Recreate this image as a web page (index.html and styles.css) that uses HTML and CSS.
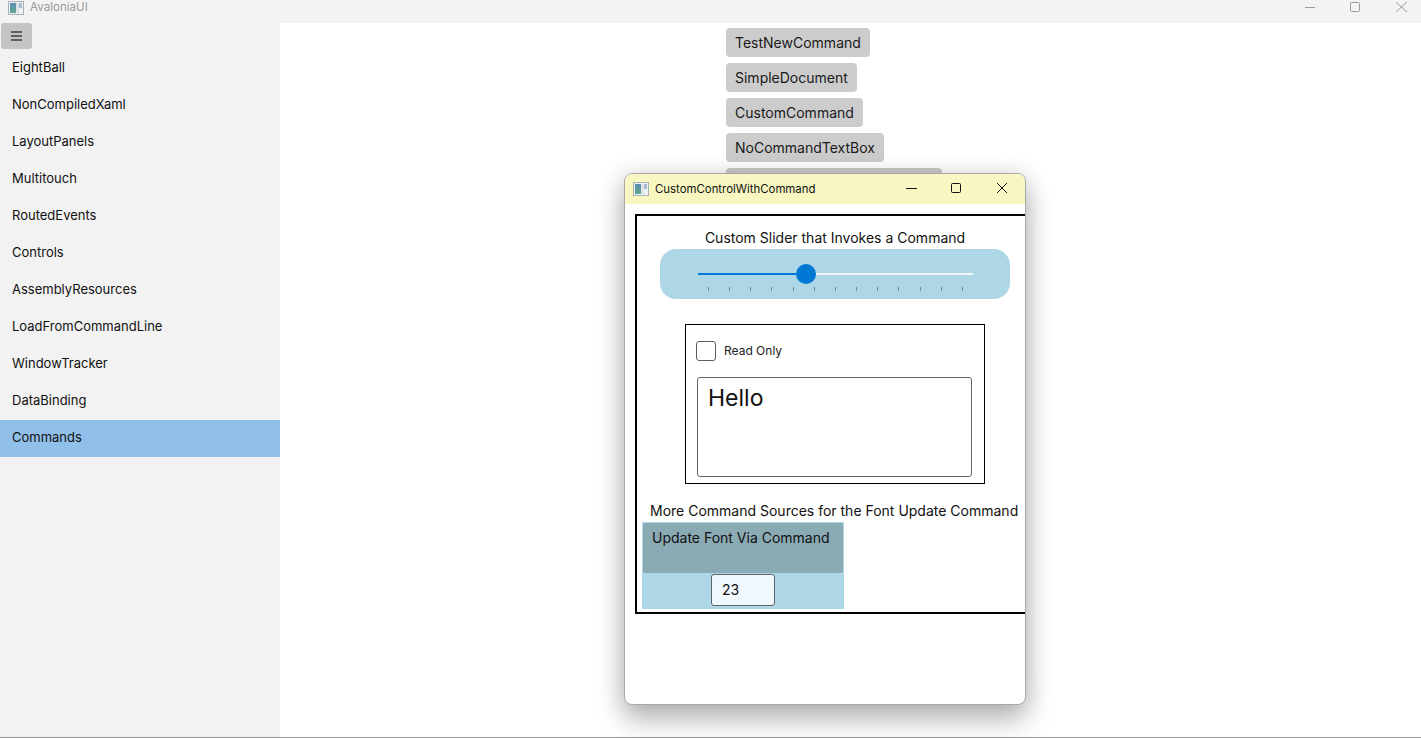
FILE: index.html
```html
<!DOCTYPE html>
<html lang="en">
<head>
<meta charset="utf-8">
<title>AvaloniaUI</title>
<link rel="stylesheet" href="styles.css">
</head>
<body>
<div class="app">
  <header class="titlebar">
    <svg class="appicon" viewBox="0 0 16 14"><defs><linearGradient id="ig" x1="0" y1="0" x2="0" y2="1"><stop offset="0" stop-color="#5b8db5"/><stop offset="1" stop-color="#5fa88c"/></linearGradient></defs><rect x=".5" y=".5" width="15" height="13" fill="#eef2f4" stroke="#a9b1b5"/><rect x="2" y="2" width="6" height="10" fill="url(#ig)"/><rect x="8" y="2" width="3" height="10" fill="#dde3e6"/><rect x="11" y="2" width="3" height="5" fill="#a9bccb"/></svg>
    <span class="apptitle">AvaloniaUI</span>
    <div class="caption">
      <svg class="capbtn" viewBox="0 0 46 23"><path d="M22 7.500h10" stroke="#9a9a9a" fill="none"/></svg>
      <svg class="capbtn" viewBox="0 0 46 23"><rect x="21.500" y="2.500" width="9" height="9" rx="1" stroke="#9a9a9a" fill="none"/></svg>
      <svg class="capbtn" viewBox="0 0 46 23"><path d="M21 2l11 10M32 2L21 12" stroke="#9a9a9a" fill="none"/></svg>
    </div>
  </header>
  <div class="body">
    <aside class="sidebar">
      <button class="hamburger"><svg viewBox="0 0 11 10" width="11" height="10"><path d="M0 1h11M0 5h11M0 9h11" stroke="#606060" stroke-width="2" fill="none"/></svg></button>
      <nav class="nav">
        <div class="navitem">EightBall</div>
        <div class="navitem">NonCompiledXaml</div>
        <div class="navitem">LayoutPanels</div>
        <div class="navitem">Multitouch</div>
        <div class="navitem">RoutedEvents</div>
        <div class="navitem">Controls</div>
        <div class="navitem">AssemblyResources</div>
        <div class="navitem">LoadFromCommandLine</div>
        <div class="navitem">WindowTracker</div>
        <div class="navitem">DataBinding</div>
        <div class="navitem selected">Commands</div>
      </nav>
    </aside>
    <main class="main">
      <button class="cmd">TestNewCommand</button>
      <button class="cmd">SimpleDocument</button>
      <button class="cmd">CustomCommand</button>
      <button class="cmd">NoCommandTextBox</button>
      <button class="cmd cmd-wide">&nbsp;</button>
    </main>
  </div>
</div>

<section class="window">
  <div class="wintitle">
    <svg class="winicon" viewBox="0 0 16 14"><rect x=".5" y=".5" width="15" height="13" fill="#eef2f4" stroke="#a9b1b5"/><rect x="2" y="2" width="6" height="10" fill="url(#ig)"/><rect x="8" y="2" width="3" height="10" fill="#dde3e6"/><rect x="11" y="2" width="3" height="5" fill="#a9bccb"/></svg>
    <span class="winname">CustomControlWithCommand</span>
    <div class="wincaption">
      <svg class="wincap" viewBox="0 0 45 30"><path d="M16 14.500h11" stroke="#111" fill="none"/></svg>
      <svg class="wincap" viewBox="0 0 45 30"><rect x="16.500" y="9.500" width="9" height="9" rx="1" stroke="#111" fill="none"/></svg>
      <svg class="wincap" viewBox="0 0 45 30"><path d="M17 9l10 10M27 9L17 19" stroke="#111" fill="none"/></svg>
    </div>
  </div>
  <div class="frame">
    <div class="slidercaption">Custom Slider that Invokes a Command</div>
    <div class="sliderpanel">
      <div class="track">
        <span class="filled"></span><span class="thumb"></span><span class="rest"></span>
      </div>
      <div class="ticks">
        <i></i><i></i><i></i><i></i><i></i><i></i><i></i><i></i><i></i><i></i><i></i><i></i><i></i>
      </div>
    </div>
    <div class="editor">
      <label class="check"><span class="box"></span><span class="checktext">Read Only</span></label>
      <div class="textbox">Hello</div>
    </div>
    <div class="morecaption">More Command Sources for the Font Update Command</div>
    <div class="sources">
      <button class="updatebtn">Update Font Via Command</button>
      <div class="sizebox">23</div>
    </div>
  </div>
</section>
</body>
</html>
```
FILE: styles.css
```css
* { box-sizing: border-box; }
html, body { margin: 0; height: 100%; overflow: hidden; }
body { font-family: Inter, "Liberation Sans", sans-serif; color: #111; background: #fff; }
button { font: inherit; color: inherit; border: 0; padding: 0; }

.app { display: flex; flex-direction: column; height: 738px; border-bottom: 1px solid #9a9a9a; }
.titlebar { display: flex; align-items: center; height: 23px; flex: none; background: #f3f3f3; padding-left: 8px; padding-bottom: 8px; }
.appicon { width: 16px; height: 14px; }
.apptitle { margin-left: 6px; font-size: 11.600px; color: #9b9b9b; line-height: 15px; }
.caption { margin-left: auto; display: flex; height: 23px; margin-top: 8px; }
.capbtn { width: 46px; height: 23px; }

.body { display: flex; flex: 1; min-height: 0; }
.sidebar { width: 280px; flex: none; background: #f2f2f2; padding-top: 0; }
.hamburger { display: flex; align-items: center; justify-content: center; width: 31px; height: 26px; margin-left: 1px; background: #c4c4c4; border-radius: 3px; }
.nav { margin-top: 1px; }
.navitem { height: 37px; line-height: 34px; padding-left: 12px; font-size: 13px; color: #111; }
.selected { background: #90c0e9; line-height: 35px; }

.main { flex: 1; display: flex; flex-direction: column; align-items: flex-start; padding: 5px 0 0 446px; gap: 6px; }
.cmd { height: 29px; padding: 0 9px; background: #cccccc; border-radius: 4px; font-size: 14px; line-height: 29px; color: #1a1a1a; }
.cmd-wide { width: 216px; }

.window { position: absolute; left: 624px; top: 173px; width: 402px; height: 532px; background: #fff; border: 1px solid #a8a8a8; border-radius: 8px; overflow: hidden; box-shadow: 0 16px 28px rgba(0,0,0,.24), 0 2px 24px rgba(0,0,0,.16); }
.wintitle { display: flex; align-items: center; height: 30px; background: #f8f7c2; padding-left: 8px; }
.winicon { width: 16px; height: 14px; flex: none; }
.winname { margin-left: 6px; font-size: 11.400px; color: #111; }
.wincaption { margin-left: auto; display: flex; }
.wincap { width: 45px; height: 30px; }

.frame { width: 440px; height: 400px; margin: 10px 0 0 10px; border: 2px solid #000; display: flex; flex-direction: column; }
.slidercaption { width: 350px; margin: 13px 0 0 23px; text-align: center; font-size: 14px; line-height: 18px; }
.sliderpanel { width: 350px; height: 50px; margin: 2px 0 0 23px; background: #add7e6; border-radius: 16px; padding: 15px 37px 0 38px; }
.track { display: flex; align-items: center; height: 20px; }
.filled { width: 98px; height: 2px; background: #0078d4; }
.thumb { width: 20px; height: 20px; border-radius: 50%; background: #0078d4; flex: none; }
.rest { flex: 1; height: 2px; background: #f0f5f8; }
.ticks { display: flex; justify-content: space-between; padding: 0 10px 0 10px; margin-top: 3px; }
.ticks i { display: block; width: 1px; height: 4px; background: #7f8b90; }

.editor { width: 300px; height: 160px; margin: 25px 0 0 48px; border: 1px solid #000; padding: 16px 12px 0 10px; }
.check { display: flex; align-items: center; height: 20px; }
.box { width: 20px; height: 20px; border: 1px solid #5e5e5e; border-radius: 3px; flex: none; }
.checktext { margin-left: 8px; font-size: 12px; line-height: 18px; color: #222; }
.textbox { width: 275px; height: 100px; margin: 16px 0 0 1px; border: 1px solid #666; border-radius: 3px; padding: 4px 10px; font-size: 23px; line-height: 32px; }

.morecaption { margin: 18px 0 0 13px; font-size: 14px; line-height: 18px; white-space: nowrap; }
.sources { width: 202px; height: 87px; margin: 2px 0 0 5px; background: #add7e6; padding: 1px; display: flex; flex-direction: column; align-items: center; }
.updatebtn { width: 200px; height: 50px; background: #8aaab4; border-radius: 2px; font-size: 14px; line-height: 18px; display: flex; align-items: flex-start; padding: 6px 0 0 9px; white-space: nowrap; }
.sizebox { width: 64px; height: 32px; margin-top: 1px; background: #f0f7fd; border: 1px solid #5e6468; border-radius: 3px; font-size: 14px; line-height: 30px; padding-left: 10px; }
```
